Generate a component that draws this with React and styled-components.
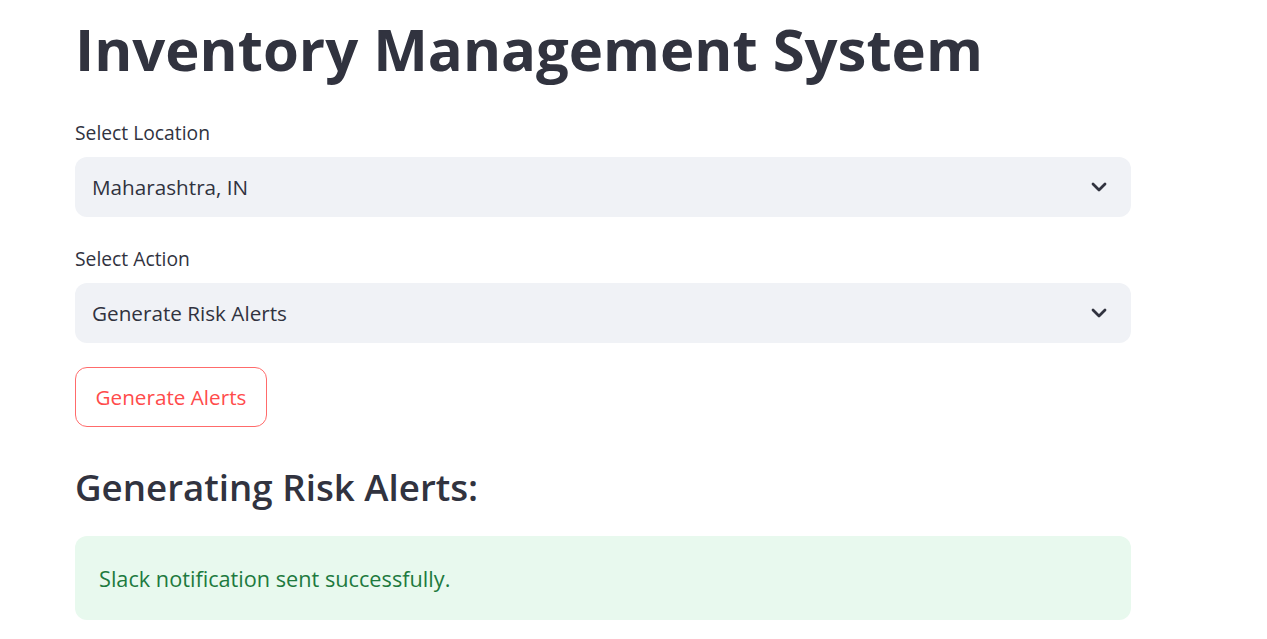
import React from "react";
import styled, { createGlobalStyle } from "styled-components";

const Global = createGlobalStyle`
  html, body { margin: 0; padding: 0; background: #ffffff; }
  body { font-family: "Open Sans", "Liberation Sans", sans-serif; color: #31333f; }
`;

const Page = styled.main`
  display: flex;
  flex-direction: column;
  width: 1056px;
  padding: 13.2px 0 0 75px;
`;

const Title = styled.h1`
  margin: 0;
  font-size: 58px;
  line-height: 72px;
  font-weight: 700;
  color: #31333f;
  white-space: nowrap;
`;

const Field = styled.div`
  display: flex;
  flex-direction: column;
  gap: 11.5px;
  margin-top: ${(p) => p.$top}px;
`;

const Label = styled.label`
  font-size: 19.3px;
  line-height: 24px;
  color: #31333f;
`;

const Select = styled.div`
  display: flex;
  align-items: center;
  justify-content: space-between;
  height: 60px;
  padding: 0 24px 0 17px;
  box-sizing: border-box;
  background: #f0f2f6;
  border-radius: 12px;
  font-size: 20.7px;
  color: #31333f;
`;

const Chevron = () => (
  <svg width="16" height="10" viewBox="0 0 16 10" fill="none">
    <path d="M2 2l6 6 6-6" stroke="#31333f" strokeWidth="2.8" strokeLinecap="round" strokeLinejoin="round" />
  </svg>
);

const Button = styled.button`
  align-self: flex-start;
  margin-top: 24px;
  height: 60px;
  padding: 0 19.5px;
  background: #ffffff;
  border: 1.5px solid #ff6b6b;
  border-radius: 12px;
  color: #ff4b4b;
  font-family: inherit;
  font-size: 20.7px;
  cursor: pointer;
`;

const Heading = styled.h3`
  margin: 36.5px 0 0;
  font-size: 36.7px;
  line-height: 48px;
  font-weight: 600;
  color: #31333f;
`;

const Alert = styled.div`
  margin-top: 24.5px;
  height: 84px;
  box-sizing: border-box;
  display: flex;
  align-items: center;
  padding: 1px 24px 0;
  background: #e8f9ee;
  border-radius: 12px;
  color: #1d7a3e;
  font-size: 21.7px;
`;

export default function App() {
  return (
    <>
      <Global />
      <Page>
        <Title>Inventory Management System</Title>
        <Field $top={36.3}>
          <Label>Select Location</Label>
          <Select>
            <span>Maharashtra, IN</span>
            <Chevron />
          </Select>
        </Field>
        <Field $top={30.5}>
          <Label>Select Action</Label>
          <Select>
            <span>Generate Risk Alerts</span>
            <Chevron />
          </Select>
        </Field>
        <Button>Generate Alerts</Button>
        <Heading>Generating Risk Alerts:</Heading>
        <Alert>Slack notification sent successfully.</Alert>
      </Page>
    </>
  );
}
